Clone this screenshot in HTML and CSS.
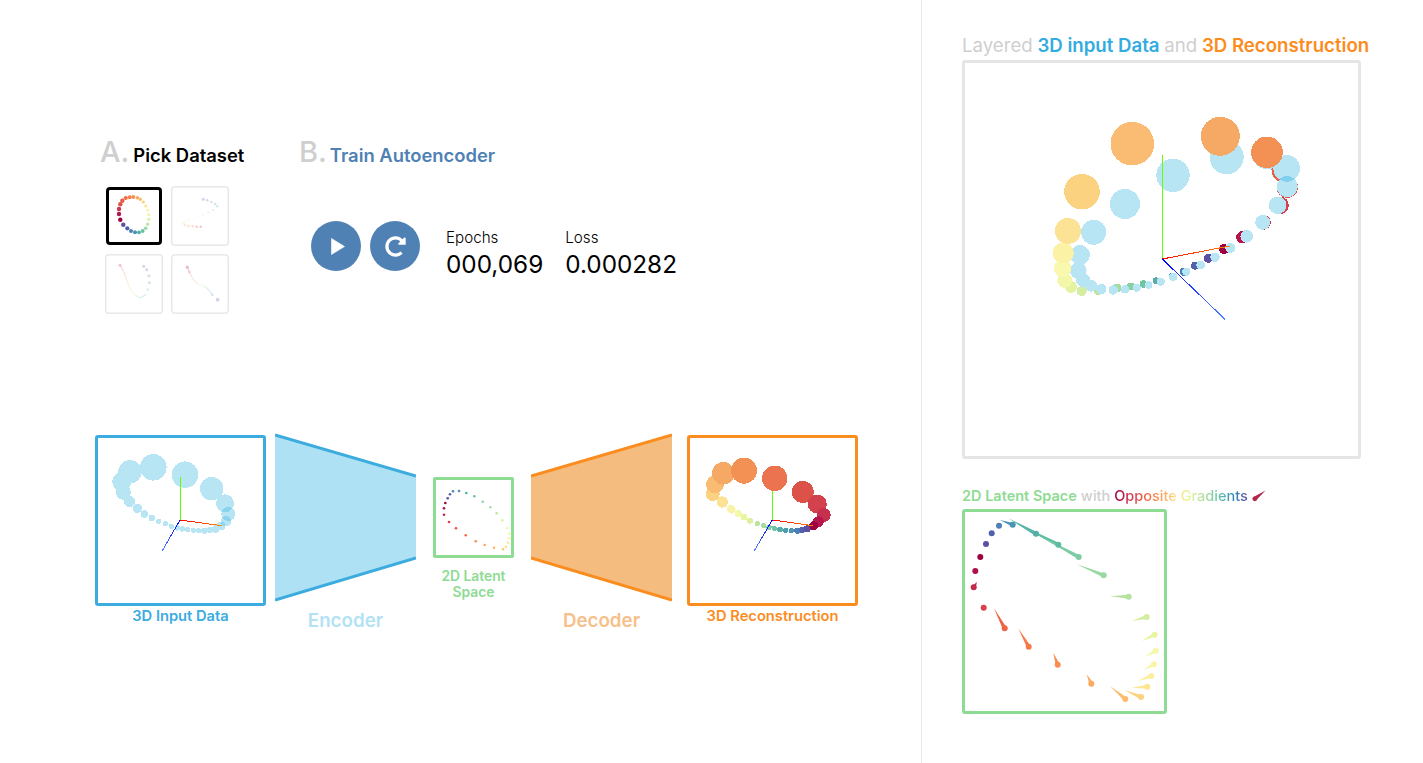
FILE: index.html
```html
<!DOCTYPE html>
<html lang="en">
<head>
<meta charset="utf-8">
<title>Autoencoder Explainer</title>
<link rel="stylesheet" href="styles.css">
</head>
<body>
<svg class="defs" aria-hidden="true">
  <defs>
    <linearGradient id="axis-red" x1="0" y1="0" x2="1" y2="0"><stop offset="0" stop-color="#f00"/><stop offset="1" stop-color="#f80"/></linearGradient>
    <linearGradient id="axis-blue" x1="0" y1="0" x2="0" y2="1"><stop offset="0" stop-color="#00f"/><stop offset="1" stop-color="#4a80ff"/></linearGradient>
    <linearGradient id="spectral" x1="0" y1="0" x2="1" y2="0"><stop offset="0" stop-color="#d53e4f"/><stop offset=".3" stop-color="#fdae61"/><stop offset=".55" stop-color="#e6f598"/><stop offset=".8" stop-color="#66c2a5"/><stop offset="1" stop-color="#3288bd"/></linearGradient>
  </defs>
</svg>
<div class="app">
  <main class="main">
    <section class="controls">
      <div class="pick">
        <h2 class="step"><span class="step-letter">A.</span><span class="step-title">Pick Dataset</span></h2>
        <div class="thumbs">
          <div class="thumb thumb-selected">
            <svg viewBox="106 187 56 58">
              <g>
                <circle cx="120.3" cy="219.7" r="2.2" fill="#9e0142"/><circle cx="119" cy="214" r="2.2" fill="#b7164c"/><circle cx="119" cy="209" r="2.2" fill="#d0344c"/><circle cx="120.3" cy="204.3" r="2.2" fill="#e0504a"/><circle cx="122.3" cy="200.7" r="2.2" fill="#e85b48"/><circle cx="125.7" cy="198" r="2.1" fill="#f46d43"/><circle cx="129.7" cy="197.3" r="2" fill="#f7804b"/><circle cx="133.3" cy="197" r="1.9" fill="#f98e52"/><circle cx="137.3" cy="197.7" r="1.8" fill="#fba95f"/><circle cx="140.3" cy="199.3" r="1.7" fill="#fdbc6c"/><circle cx="143.3" cy="202" r="1.6" fill="#fdd27e"/><circle cx="145.7" cy="206" r="1.6" fill="#fde690"/><circle cx="147.7" cy="210" r="1.6" fill="#f9f5a8"/><circle cx="148.7" cy="214.7" r="1.6" fill="#eef8a8"/><circle cx="148.7" cy="219.3" r="1.6" fill="#dcf0a0"/><circle cx="147.7" cy="224.3" r="1.7" fill="#bfe5a0"/><circle cx="145.7" cy="228.3" r="1.8" fill="#9ad9a4"/><circle cx="142.7" cy="231" r="1.9" fill="#66c2a5"/><circle cx="139" cy="232.3" r="1.9" fill="#50b0a8"/><circle cx="135" cy="232.3" r="2" fill="#4a94b5"/><circle cx="131" cy="231" r="2" fill="#4f81b5"/><circle cx="127.3" cy="228.3" r="2.1" fill="#4f62ab"/><circle cx="123.3" cy="224.7" r="2.2" fill="#5e4fa2"/>
              </g>
            </svg>
          </div>
          <div class="thumb">
            <svg viewBox="171 186 58 60">
              <g class="thumb-faded">
                <circle cx="203.3" cy="199.3" r="1.5" fill="#5e4fa2"/><circle cx="207.3" cy="200.3" r="1.3" fill="#4f62ab"/><circle cx="211.3" cy="202" r="1.3" fill="#4f81b5"/><circle cx="215" cy="204" r="1.3" fill="#4a94b5"/><circle cx="217.3" cy="206.3" r="1.3" fill="#50b0a8"/><circle cx="213.3" cy="210" r="1" fill="#66c2a5"/><circle cx="208.3" cy="212.3" r="1" fill="#9ad9a4"/><circle cx="203.3" cy="214.7" r="1" fill="#bfe5a0"/><circle cx="198.3" cy="216.7" r="1" fill="#dcf0a0"/><circle cx="193.3" cy="218.3" r="1" fill="#f9f5a8"/><circle cx="188.3" cy="220" r="1" fill="#fde690"/><circle cx="184.3" cy="221.7" r="1" fill="#fdd27e"/><circle cx="182.7" cy="223.7" r="1" fill="#fdbc6c"/><circle cx="185" cy="225" r="1.2" fill="#fba95f"/><circle cx="188.3" cy="226" r="1.2" fill="#f98e52"/><circle cx="192.7" cy="226.3" r="1.2" fill="#f46d43"/><circle cx="196.7" cy="226.7" r="1.2" fill="#d0344c"/><circle cx="200.7" cy="226.7" r="1.2" fill="#b7164c"/>
              </g>
            </svg>
          </div>
          <div class="thumb">
            <svg viewBox="105 254 58 60">
              <g class="thumb-faded">
                <polyline class="thumb-curve" points="120,265.3 123.3,270.7 125.7,276.7 127.7,282.7 130,288.3 133.3,293.3 137.7,296.7 141,297.7 145,295"/>
                <circle cx="120" cy="265.3" r="1.5" fill="#b7164c"/><circle cx="145" cy="295" r="1.2" fill="#9ad9a4"/><circle cx="147.7" cy="289.7" r="1.4" fill="#66c2a5"/><circle cx="149.3" cy="282.7" r="1.5" fill="#4a94b5"/><circle cx="149" cy="275.7" r="1.5" fill="#4f81b5"/><circle cx="146.7" cy="269.7" r="1.5" fill="#4f62ab"/><circle cx="143.7" cy="266.3" r="1.5" fill="#5e4fa2"/>
              </g>
            </svg>
          </div>
          <div class="thumb">
            <svg viewBox="171 254 58 60">
              <g class="thumb-faded">
                <polyline class="thumb-curve" points="187.3,267.3 189.3,272 191.7,276.7 194.3,280.7 197.7,284 201.7,285.3 206,287.3 209.7,291 212.3,294.7"/>
                <circle cx="187.3" cy="267.3" r="1.7" fill="#9e0142"/><circle cx="189.3" cy="272" r="1.4" fill="#d0344c"/><circle cx="212.3" cy="294.7" r="1.3" fill="#4a94b5"/><circle cx="217.7" cy="299.7" r="1.9" fill="#5e4fa2"/>
              </g>
            </svg>
          </div>
        </div>
      </div>
      <div class="train">
        <h2 class="step step-tight"><span class="step-letter">B.</span><span class="step-title step-title-blue">Train Autoencoder</span></h2>
        <div class="train-body">
          <div class="buttons">
            <button class="round-btn" type="button" aria-label="Play">
              <svg class="icon-play" viewBox="0 0 14 17"><polygon points="0.5,0.5 13.5,8.5 0.5,16.5"/></svg>
            </button>
            <button class="round-btn" type="button" aria-label="Reset">
              <svg class="icon-redo" viewBox="0 0 512 512"><path d="M256.455 8c66.269.119 126.437 26.233 170.859 68.685l35.715-35.715C478.149 25.851 504 36.559 504 57.941V192c0 13.255-10.745 24-24 24H345.941c-21.382 0-32.09-25.851-16.971-40.971l41.75-41.75c-30.864-28.899-70.801-44.907-113.23-45.273-92.398-.798-170.283 73.977-169.484 169.442C88.764 348.009 162.184 424 256 424c41.127 0 79.997-14.678 110.629-41.556 4.743-4.161 11.906-3.908 16.368.553l39.662 39.662c4.872 4.872 4.631 12.815-.482 17.433C378.202 479.813 319.926 504 256 504 119.034 504 8.001 392.967 8 256.002 7.999 119.193 119.646 7.755 256.455 8z"/></svg>
            </button>
          </div>
          <div class="stats">
            <div class="stat"><div class="stat-label">Epochs</div><div class="stat-value">000,069</div></div>
            <div class="stat"><div class="stat-label">Loss</div><div class="stat-value">0.000282</div></div>
          </div>
        </div>
      </div>
    </section>

    <section class="pipeline">
      <figure class="stage stage-plot">
        <div class="plot plot-blue">
          <svg class="canvas" viewBox="98 438 165 165">
            <g class="crisp" fill="#b8e5f4">
              <circle cx="185" cy="474.7" r="13.3"/><circle cx="153.3" cy="467.3" r="13.3"/><circle cx="130" cy="471.7" r="11.7"/><circle cx="121.7" cy="481.7" r="9.5"/><circle cx="123.3" cy="492.3" r="7.5"/><circle cx="129.3" cy="501.3" r="5.7"/><circle cx="137.3" cy="508.3" r="4.7"/><circle cx="144.3" cy="514" r="3.7"/><circle cx="151.7" cy="518" r="3.2"/><circle cx="158.7" cy="521.3" r="2.7"/><circle cx="165.3" cy="523.7" r="2.7"/><circle cx="171.3" cy="526.3" r="2.7"/><circle cx="177.3" cy="528" r="2.7"/><circle cx="182.3" cy="529" r="2.7"/><circle cx="187.7" cy="529.7" r="2.7"/><circle cx="193.3" cy="530.3" r="2.7"/><circle cx="198.7" cy="530.7" r="2.7"/><circle cx="204.3" cy="530.7" r="3"/><circle cx="210" cy="530" r="3"/><circle cx="215.7" cy="529" r="3.7"/><circle cx="221" cy="526" r="4.5"/>
              <g class="soft"><circle cx="226" cy="521.3" r="5.3"/><circle cx="228.3" cy="514" r="7"/><circle cx="225" cy="503.3" r="9"/></g>
              <circle cx="211.7" cy="488.7" r="11.7"/>
            </g>
            <g class="axes">
              <line class="axis-g" x1="180" y1="520" x2="180" y2="476.7"/>
              <line class="axis-r" x1="180" y1="520" x2="221.7" y2="525.7"/>
              <line class="axis-b" x1="180" y1="520" x2="162.3" y2="550.7"/>
            </g>
          </svg>
        </div>
        <figcaption class="caption caption-blue">3D Input Data</figcaption>
      </figure>

      <figure class="stage stage-funnel stage-encoder">
        <svg class="funnel" viewBox="0 0 141 169">
          <polygon class="funnel-fill-blue" points="0,2 141,43 141,125 0,167"/>
          <line class="funnel-line-blue" x1="0" y1="2" x2="141" y2="43"/>
          <line class="funnel-line-blue" x1="0" y1="167" x2="141" y2="125"/>
        </svg>
        <figcaption class="funnel-label funnel-label-blue">Encoder</figcaption>
      </figure>

      <figure class="stage stage-latent">
        <div class="plot-latent">
          <svg class="canvas" viewBox="436 480 75 75">
            <g>
              <circle cx="453" cy="491.3" r="1.3" fill="#4f81b5"/><circle cx="459" cy="491" r="1.3" fill="#4a94b5"/><circle cx="466.3" cy="493" r="1.3" fill="#50b0a8"/><circle cx="474.3" cy="496.3" r="1.3" fill="#66c2a5"/><circle cx="482.7" cy="501.7" r="1.3" fill="#8ad3a4"/><circle cx="490.3" cy="507.3" r="1.3" fill="#a5dca4"/><circle cx="496.7" cy="513.3" r="1.3" fill="#bfe5a0"/><circle cx="502.3" cy="520.3" r="1.3" fill="#dcf0a0"/><circle cx="507.3" cy="528" r="1.3" fill="#f0f7a8"/><circle cx="509" cy="533.7" r="1.3" fill="#f7f7aa"/><circle cx="509" cy="538.3" r="1.3" fill="#fbf3a4"/><circle cx="508" cy="542.7" r="1.3" fill="#fde890"/><circle cx="506" cy="546.7" r="1.3" fill="#fddc86"/><circle cx="503" cy="549.3" r="1.3" fill="#fdc874"/><circle cx="494" cy="547.7" r="1.3" fill="#fdb768"/><circle cx="484.7" cy="545" r="1.3" fill="#fca55d"/><circle cx="475.7" cy="541.3" r="1.3" fill="#f98e52"/><circle cx="465.7" cy="535.3" r="1.3" fill="#f46d43"/><circle cx="456" cy="528.3" r="1.3" fill="#e8553f"/><circle cx="449" cy="522" r="1.3" fill="#d9424c"/><circle cx="444" cy="514.7" r="1.3" fill="#c0264c"/><circle cx="444" cy="508.3" r="1.3" fill="#ae0f4a"/><circle cx="445.3" cy="503" r="1.3" fill="#9e0142"/><circle cx="447.7" cy="498.3" r="1.3" fill="#5e4fa2"/><circle cx="450" cy="494.3" r="1.3" fill="#4f62ab"/>
            </g>
          </svg>
        </div>
        <figcaption class="caption caption-green">2D Latent<br>Space</figcaption>
      </figure>

      <figure class="stage stage-funnel stage-decoder">
        <svg class="funnel" viewBox="0 0 141 169">
          <polygon class="funnel-fill-orange" points="0,43 141,2 141,167 0,125"/>
          <line class="funnel-line-orange" x1="0" y1="43" x2="141" y2="2"/>
          <line class="funnel-line-orange" x1="0" y1="125" x2="141" y2="167"/>
        </svg>
        <figcaption class="funnel-label funnel-label-orange">Decoder</figcaption>
      </figure>

      <figure class="stage stage-plot stage-recon">
        <div class="plot plot-orange">
          <svg class="canvas" viewBox="690 438 165 165">
            <g class="crisp">
              <circle cx="712.7" cy="494" r="7" fill="#fbd27f"/><circle cx="715" cy="484.3" r="9" fill="#f9bc72"/><circle cx="723.3" cy="473.3" r="11.3" fill="#f6a965"/><circle cx="744" cy="470.7" r="13" fill="#f39053"/><circle cx="774.7" cy="478.3" r="12.7" fill="#ec734f"/><circle cx="802.7" cy="492" r="11" fill="#dc5248"/><circle cx="817.3" cy="504" r="9.5" fill="#d3424c"/><circle cx="823.7" cy="515" r="7" fill="#c5304c"/><circle cx="818.3" cy="521.7" r="5.5" fill="#b7164c"/><circle cx="722.3" cy="502" r="5.7" fill="#fbe294"/><circle cx="731.3" cy="509.3" r="4.3" fill="#f8f3a6"/><circle cx="738.3" cy="513.7" r="3.7" fill="#f5f7aa"/><circle cx="744" cy="517.3" r="3.2" fill="#eaf5a2"/><circle cx="750" cy="520.7" r="3" fill="#dcf0a0"/><circle cx="757.3" cy="523.7" r="2.7" fill="#bce4a0"/><circle cx="763.7" cy="525.7" r="2.7" fill="#a4dca4"/><circle cx="769" cy="527.3" r="2.7" fill="#88d0a4"/><circle cx="774.3" cy="528.3" r="2.7" fill="#70c5a4"/><circle cx="780" cy="529.7" r="2.7" fill="#58aca8"/><circle cx="785.7" cy="530.3" r="2.7" fill="#4f9bae"/><circle cx="791.3" cy="530.7" r="2.7" fill="#4a94b5"/><circle cx="797.3" cy="530.7" r="3" fill="#4b7fb8"/><circle cx="802.3" cy="530" r="3" fill="#5462ac"/><circle cx="807.3" cy="528.7" r="3.5" fill="#5e4fa2"/><circle cx="813.7" cy="525.7" r="4.5" fill="#9e0142"/>
            </g>
            <g class="axes">
              <line class="axis-g" x1="772.3" y1="520" x2="772.3" y2="490.7"/>
              <line class="axis-r" x1="772.3" y1="520" x2="813.3" y2="525.7"/>
              <line class="axis-b" x1="772.3" y1="520" x2="754.3" y2="550.7"/>
            </g>
          </svg>
        </div>
        <figcaption class="caption caption-orange">3D Reconstruction</figcaption>
      </figure>
    </section>
  </main>

  <aside class="side">
    <h3 class="side-title"><span class="muted">Layered</span> <span class="text-blue">3D input Data</span> <span class="muted">and</span> <span class="text-orange">3D Reconstruction</span></h3>
    <div class="plot-large">
      <svg class="canvas" viewBox="965 63 393 393">
        <g class="crisp">
          <circle cx="1285" cy="169.5" r="13.5" fill="#e8604a"/><circle cx="1287.3" cy="187.3" r="10.7" fill="#dc5248"/><circle cx="1280" cy="205.3" r="8.8" fill="#d3424c"/><circle cx="1263.3" cy="222.3" r="7.5" fill="#c5304c"/><circle cx="1242.3" cy="237.3" r="6.2" fill="#b7164c"/><circle cx="1224" cy="249" r="5" fill="#9e0142"/><circle cx="1208.3" cy="258.3" r="4.5" fill="#5e4fa2"/><circle cx="1195" cy="265.7" r="4" fill="#5462ac"/><circle cx="1183.7" cy="271.7" r="4" fill="#4b7fb8"/><circle cx="1172.7" cy="276.7" r="4" fill="#4a94b5"/><circle cx="1156" cy="280.7" r="3.4" fill="#58aca8"/><circle cx="1143.3" cy="284" r="3.7" fill="#70c5a4"/><circle cx="1131" cy="286.5" r="4" fill="#88d0a4"/><circle cx="1117" cy="288" r="4.5" fill="#a4dca4"/><circle cx="1098" cy="291" r="4" fill="#bce4a0"/><circle cx="1081.7" cy="291" r="5" fill="#d4eda0"/><circle cx="1071" cy="287" r="6" fill="#e3f3a1"/>
        </g>
        <g class="crisp" fill="#b8e5f4">
          <circle cx="1226.7" cy="157.3" r="17"/><circle cx="1267.3" cy="154.3" r="15"/><circle cx="1286.7" cy="168.3" r="13.3"/><circle cx="1287.3" cy="186.7" r="10.5"/><circle cx="1277.7" cy="205.3" r="8.8"/><circle cx="1262.7" cy="222.3" r="7.5"/><circle cx="1246.7" cy="236.3" r="6.3"/><circle cx="1230.3" cy="248" r="5"/><circle cx="1215" cy="257.3" r="4.7"/><circle cx="1200.7" cy="265" r="4.3"/><circle cx="1186.3" cy="271.7" r="4"/><circle cx="1173.3" cy="277" r="4.2"/><circle cx="1160.7" cy="281.7" r="4"/><circle cx="1148.7" cy="285" r="3.7"/><circle cx="1136.7" cy="287.7" r="4"/><circle cx="1125" cy="289.3" r="4.3"/><circle cx="1113.3" cy="290" r="4.7"/><circle cx="1101.3" cy="289" r="5.3"/><circle cx="1091" cy="285.7" r="6"/><circle cx="1083" cy="280" r="7"/><circle cx="1078.3" cy="270.7" r="8.3"/><circle cx="1080" cy="255" r="10"/><circle cx="1093.7" cy="232.3" r="12.5"/><circle cx="1125" cy="204" r="15"/><circle cx="1173" cy="175.3" r="16.7"/>
          <path class="lens" d="M1279.5 179.3A13.3 13.3 0 0 0 1294.5 179.3A10.5 10.5 0 0 0 1279.5 179.3Z"/>
        </g>
        <g class="crisp">
          <circle cx="1064.7" cy="280.3" r="7.5" fill="#f2f7aa"/><circle cx="1062.7" cy="268.3" r="8.8" fill="#f8f8ae"/><circle cx="1063.3" cy="253" r="10.5" fill="#fbf2a6"/><circle cx="1068" cy="231" r="13" fill="#fbe294"/><circle cx="1082" cy="191.7" r="17.8" fill="#fbd27f"/><circle cx="1132.3" cy="143.7" r="21.8" fill="#f9bc72"/><circle cx="1220.3" cy="136.3" r="19.5" fill="#f6a965"/><circle cx="1267" cy="152.3" r="15.8" fill="#f39053"/>
        </g>
        <g class="axes">
          <line class="axis-g" x1="1162.3" y1="259" x2="1162.3" y2="155"/>
          <line class="axis-r" x1="1162.3" y1="259" x2="1230" y2="246"/>
          <line class="axis-b" x1="1162.3" y1="259" x2="1225" y2="319.3"/>
        </g>
      </svg>
    </div>
    <h4 class="latent-title"><span class="text-green">2D Latent Space</span> <span class="muted">with</span> <span class="text-spectral">Opposite Gradients</span> <svg class="tail-icon" viewBox="0 0 14 12"><polygon points="13.5,0.5 1.5,7 4,10.5"/><circle cx="2.8" cy="8.8" r="2.4"/></svg></h4>
    <div class="plot-latent-large">
      <svg class="canvas" viewBox="965 512 199 199">
        <g>
          <polygon points="1013.3,523 1012.1,526.4 1000,520" fill="#4a94b5"/><polygon points="1037,532 1035,535.4 1008.3,518.3" fill="#50b0a8"/><polygon points="1059.2,542.9 1057.4,546.5 1016.7,523.3" fill="#5ebca5"/><polygon points="1079.7,555.2 1077.7,558.8 1038.3,535" fill="#7dcba4"/><polygon points="1104.5,573.5 1103,577.2 1076.7,564.3" fill="#9ad9a4"/><polygon points="1128.7,594.7 1128.7,598.7 1110,596.3" fill="#b6e29f"/><polygon points="1147.2,618.9 1146.2,615.1 1131.7,621" fill="#d4eda0"/><polygon points="1155.6,636.5 1153.8,632.9 1141.7,641" fill="#e8f5a0"/><polygon points="1156.7,652.4 1154.7,649 1145,656.7" fill="#f5f8a8"/><polygon points="1155,666 1153,662.6 1143.3,670" fill="#f9f5a8"/><polygon points="1152,677.9 1150.6,674.1 1137.7,681" fill="#fcf0a0"/><polygon points="1147.4,688.7 1147.2,684.7 1131.7,687.7" fill="#fde690"/><polygon points="1141.8,695.2 1140.2,698.9 1124.3,690" fill="#fdd27e"/><polygon points="1126.6,697.5 1124,700.5 1110,686" fill="#fdbc6c"/><polygon points="1093.1,682.8 1089.5,684.6 1086.7,674.3" fill="#fba95f"/><polygon points="1059.6,664 1055.8,665.4 1053.3,652.7" fill="#f98e52"/><polygon points="1030.4,645.7 1027,647.7 1018.3,628.3" fill="#f57a4a"/><polygon points="1006.5,627.4 1002.9,629.2 994,608.3" fill="#ee6445"/><polygon points="975.4,588.3 972,586.3 977,582" fill="#c2294c"/>
        </g>
        <g>
          <circle cx="999" cy="525.7" r="3" fill="#4f7fbb"/><circle cx="1012.7" cy="524.7" r="3" fill="#4a94b5"/><circle cx="1036" cy="533.7" r="3" fill="#50b0a8"/><circle cx="1058.3" cy="544.7" r="3" fill="#5ebca5"/><circle cx="1078.7" cy="557" r="3" fill="#7dcba4"/><circle cx="1103.7" cy="575.3" r="3" fill="#9ad9a4"/><circle cx="1128.7" cy="596.7" r="3" fill="#b6e29f"/><circle cx="1146.7" cy="617" r="3" fill="#d4eda0"/><circle cx="1154.7" cy="634.7" r="3" fill="#e8f5a0"/><circle cx="1155.7" cy="650.7" r="3" fill="#f5f8a8"/><circle cx="1154" cy="664.3" r="3" fill="#f9f5a8"/><circle cx="1151.3" cy="676" r="3" fill="#fcf0a0"/><circle cx="1147.3" cy="686.7" r="3" fill="#fde690"/><circle cx="1141" cy="697" r="3" fill="#fdd27e"/><circle cx="1125.3" cy="699" r="3" fill="#fdbc6c"/><circle cx="1091.3" cy="683.7" r="3" fill="#fba95f"/><circle cx="1057.7" cy="664.7" r="3" fill="#f98e52"/><circle cx="1028.7" cy="646.7" r="3" fill="#f57a4a"/><circle cx="1004.7" cy="628.3" r="3" fill="#ee6445"/><circle cx="983.7" cy="607.7" r="3" fill="#d9424c"/><circle cx="973.7" cy="587.3" r="3" fill="#c2294c"/><circle cx="975.3" cy="571" r="3" fill="#ae0f4a"/><circle cx="980.3" cy="557" r="3" fill="#9e0142"/><circle cx="986" cy="544" r="3" fill="#5e4fa2"/><circle cx="991.7" cy="533.3" r="3" fill="#4f62ab"/>
        </g>
      </svg>
    </div>
  </aside>
</div>
</body>
</html>
```
FILE: styles.css
```css
* { box-sizing: border-box; }
html, body { margin: 0; padding: 0; background: #fff; }
body { font-family: Inter, "Liberation Sans", sans-serif; color: #000; overflow: hidden; }
figure { margin: 0; }
h2, h3, h4 { margin: 0; font-weight: 500; }
svg { display: block; }
.defs { width: 0; height: 0; overflow: hidden; }

.app { display: flex; height: 763px; }
.main { width: 922px; flex: none; border-right: 1px solid #eaeaea; padding: 134px 0 0 95px; }
.side { flex: 1; padding: 33px 0 0 40px; }

/* Steps */
.controls { display: flex; height: 180px; }
.pick { width: 199px; margin-left: 5px; flex: none; }
.step { display: flex; align-items: baseline; height: 36px; gap: 4px; }
.step-tight { gap: 3px; }
.step-letter { font-size: 29px; line-height: 36px; font-weight: 500; color: #cfcfcf; }
.step-title { font-size: 18.4px; font-weight: 600; white-space: nowrap; }
.step-title-blue { color: #4f81b5; }

.thumbs { display: grid; grid-template-columns: 58px 58px; grid-template-rows: 60px 60px; gap: 8px; margin: 16px 0 0 5px; }
.thumb { border-radius: 4px; box-shadow: inset 0 0 0 1.5px #e8e8e8; }
.thumb svg { width: 100%; height: 100%; filter: blur(.35px); }
.thumb-selected { margin: 1px; box-shadow: inset 0 0 0 3px #000; }
.thumb-faded { opacity: .25; }
.thumb-curve { fill: none; stroke: url(#spectral); stroke-width: 1.1; }

.train-body { display: flex; align-items: flex-start; margin: 51px 0 0 12px; }
.buttons { display: flex; gap: 9px; }
.round-btn { width: 50px; height: 50px; border: 0; padding: 0; border-radius: 50%; background: #4f81b5; display: flex; align-items: center; justify-content: center; }
.icon-play { width: 14px; height: 17px; margin-left: 3px; fill: #fff; stroke: #fff; stroke-width: .6; stroke-linejoin: round; }
.icon-redo { width: 21px; height: 21px; fill: #fff; }
.stats { display: flex; gap: 22px; margin: 7px 0 0 26px; }
.stat-label { font-size: 15.2px; line-height: 20px; font-weight: 300; }
.stat-value { font-size: 24.3px; line-height: 32px; font-weight: 400; white-space: nowrap; }

/* Pipeline */
.pipeline { display: flex; margin-top: 119px; align-items: flex-start; }
.stage { flex: none; }
.stage-plot { width: 171px; margin-top: 2px; }
.stage-funnel { width: 141px; }
.stage-encoder { margin-left: 9px; }
.stage-latent { width: 81px; margin: 44px 0 0 17px; }
.stage-decoder { margin-left: 17px; }
.stage-recon { margin-left: 15px; }

.plot { height: 171px; border-radius: 3px; }
.plot-blue { border: 3px solid #3cacdf; }
.plot-orange { border: 3px solid #fb8c1e; }
.plot-latent { height: 81px; border: 3px solid #8edb93; border-radius: 2px; }
.canvas { width: 100%; height: 100%; }
.crisp { shape-rendering: crispEdges; }
.soft { fill: #34b5e0; fill-opacity: .35; }
.lens { fill: #7fd0ee; }

.axes line { stroke-width: 1; shape-rendering: crispEdges; }
.axis-g { stroke: #66ff00; }
.axis-r { stroke: url(#axis-red); }
.axis-b { stroke: url(#axis-blue); }

.funnel { width: 141px; height: 169px; }
.funnel-fill-blue { fill: #aee1f3; }
.funnel-line-blue { stroke: #3cacdf; stroke-width: 3; }
.funnel-fill-orange { fill: #f5bc80; }
.funnel-line-orange { stroke: #fb8c1e; stroke-width: 3; }
.funnel-label { font-size: 18.75px; line-height: 24px; font-weight: 600; text-align: center; margin-top: 7px; }
.funnel-label-blue { color: #b3e2f4; }
.funnel-label-orange { color: #f7c08a; }

.caption { text-align: center; font-size: 14.7px; line-height: 20px; font-weight: 600; white-space: nowrap; }
.caption-blue { color: #3cacdf; }
.caption-orange { color: #fb8c1e; }
.caption-green { color: #8edb93; font-size: 13.8px; line-height: 16px; margin-top: 10px; }

/* Side */
.side-title { font-size: 18.65px; line-height: 24px; font-weight: 600; white-space: nowrap; margin-bottom: 3px; }
.side-title .muted { font-weight: 400; }
.muted { color: #cfcfcf; }
.text-blue { color: #32ace0; }
.text-orange { color: #fb8c1e; }
.text-green { color: #8edb93; font-weight: 600; }
.text-spectral { background: linear-gradient(90deg, #9e0142 0%, #d53e4f 14%, #f46d43 26%, #fdae61 38%, #fee08b 46%, #e6f598 56%, #abdda4 68%, #66c2a5 78%, #3288bd 90%, #5e4fa2 100%); -webkit-background-clip: text; background-clip: text; color: transparent; }
.plot-large { width: 399px; height: 399px; border: 3px solid #e5e5e5; border-radius: 3px; }
.latent-title { display: flex; gap: 4px; font-size: 14.5px; line-height: 20px; font-weight: 500; white-space: nowrap; margin: 27px 0 3px; align-items: center; }
.tail-icon { width: 14px; height: 12px; fill: #b0284f; }
.plot-latent-large { width: 205px; height: 205px; border: 3px solid #8edb93; border-radius: 3px; }
```
